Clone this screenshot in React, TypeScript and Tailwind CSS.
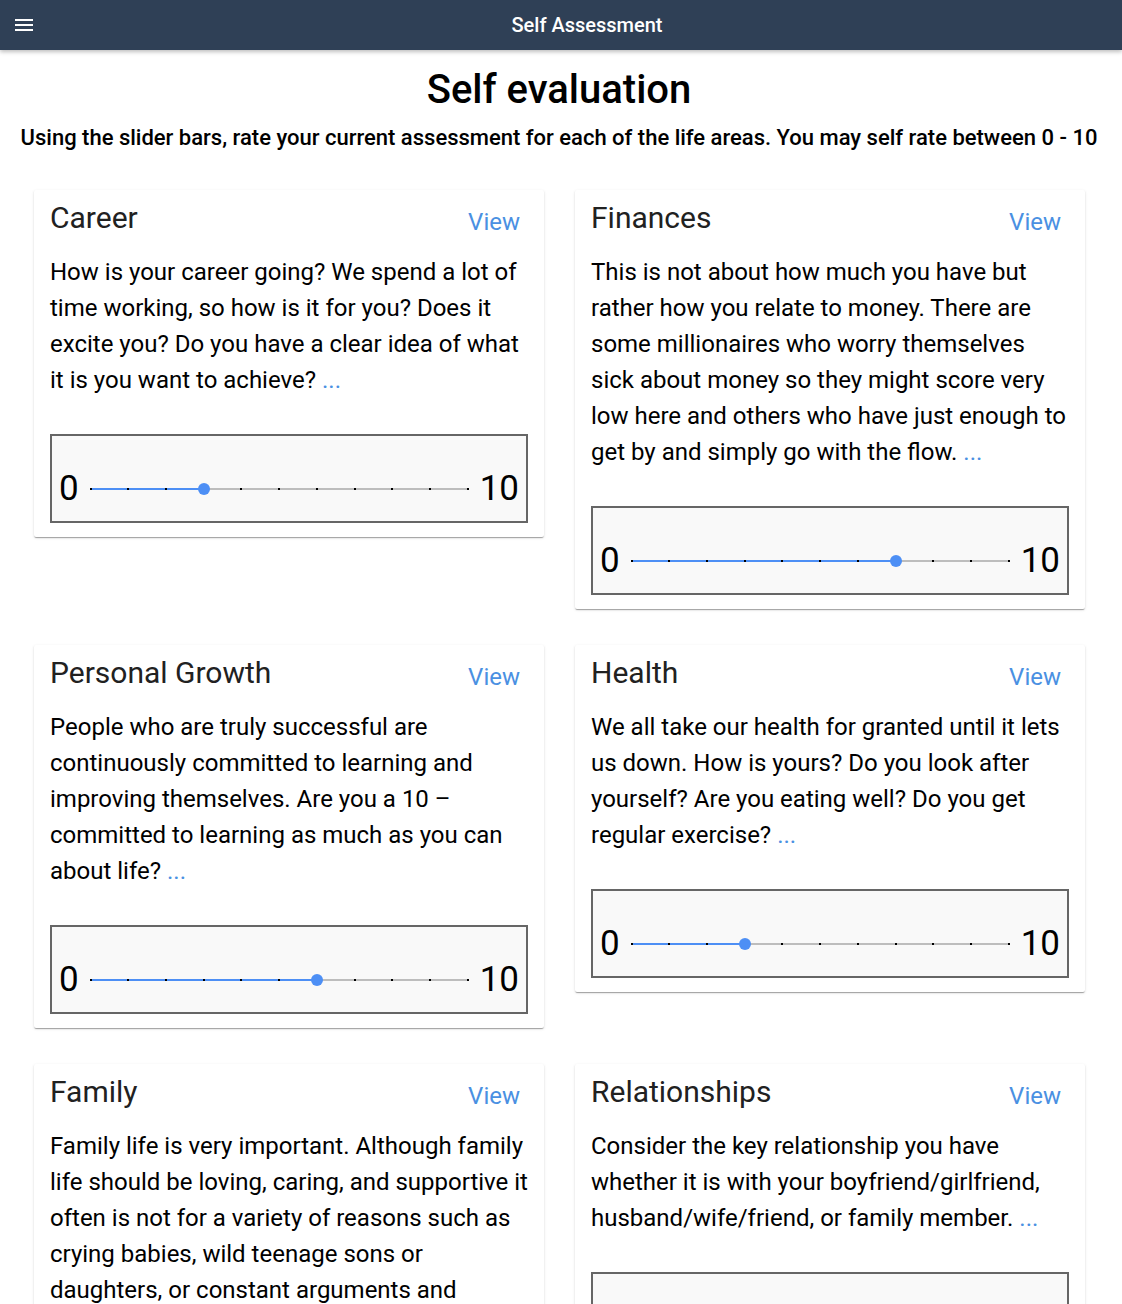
import React from "react";

type Area = {
  title: string;
  text: string;
  value: number;
};

const areas: Area[] = [
  {
    title: "Career",
    text: "How is your career going? We spend a lot of time working, so how is it for you? Does it excite you? Do you have a clear idea of what it is you want to achieve?",
    value: 3,
  },
  {
    title: "Finances",
    text: "This is not about how much you have but rather how you relate to money. There are some millionaires who worry themselves sick about money so they might score very low here and others who have just enough to get by and simply go with the flow.",
    value: 7,
  },
  {
    title: "Personal Growth",
    text: "People who are truly successful are continuously committed to learning and improving themselves. Are you a 10 \u2013 committed to learning as much as you can about life?",
    value: 6,
  },
  {
    title: "Health",
    text: "We all take our health for granted until it lets us down. How is yours? Do you look after yourself? Are you eating well? Do you get regular exercise?",
    value: 3,
  },
  {
    title: "Family",
    text: "Family life is very important. Although family life should be loving, caring, and supportive it often is not for a variety of reasons such as crying babies, wild teenage sons or daughters, or constant arguments and disagreements.",
    value: 5,
  },
  {
    title: "Relationships",
    text: "Consider the key relationship you have whether it is with your boyfriend/girlfriend, husband/wife/friend, or family member.",
    value: 5,
  },
];

const ticks = [0, 1, 2, 3, 4, 5, 6, 7, 8, 9, 10];

function Slider({ value }: { value: number }) {
  const pct = value * 10;
  return (
    <div className="h-[89px] border-2 border-[#666666] bg-[#f9f9f9] flex items-center pt-[20px] pl-[7px] pr-[7px]">
      <span className="text-[35px] leading-none text-black">0</span>
      <div className="relative flex-1 h-[2px] mx-3 bg-[#bdbdbd]">
        {/* filled part */}
        <div className="absolute left-0 top-0 h-[2px] bg-[#4d8ff5]" style={{ width: `${pct}%` }} />
        {ticks.map((t) => (
          <div
            key={t}
            className="absolute top-0 w-[2px] h-[2px] -ml-[1px] bg-black"
            style={{ left: `${t * 10}%` }}
          />
        ))}
        <div
          className="absolute top-1/2 w-3 h-3 -ml-1.5 -mt-1.5 rounded-full bg-[#4d8ff5]"
          style={{ left: `${pct}%` }}
        />
      </div>
      <span className="text-[35px] leading-none text-black">10</span>
    </div>
  );
}

function AreaCard({ area }: { area: Area }) {
  return (
    <div className="bg-white rounded-[2px] px-4 pt-2 pb-[14px] shadow-[0_2px_1px_-1px_rgba(0,0,0,0.2),0_1px_1px_0_rgba(0,0,0,0.14),0_1px_3px_0_rgba(0,0,0,0.12)]">
      <div className="flex items-center justify-between">
        <h2 className="text-[30px] leading-[40px] text-[#212121]">{area.title}</h2>
        <a className="text-[24px] leading-[32px] text-[#4a90e2] mt-2 mr-2">View</a>
      </div>
      <p className="mt-4 text-[24px] leading-[36px] text-black">
        {area.text} <span className="text-[#4a90e2]">...</span>
      </p>
      <div className="mt-[36px]">
        <Slider value={area.value} />
      </div>
    </div>
  );
}

export default function App() {
  return (
    <div className="min-h-screen bg-white font-['Roboto',sans-serif]">
      {/* Top bar */}
      <header className="h-[50px] bg-[#2f4056] flex items-center text-white shadow-[0_2px_4px_rgba(0,0,0,0.25)]">
        <button className="w-[52px] h-full flex items-center pl-[15px]">
          <span className="flex flex-col gap-[3px]">
            <span className="block w-[18px] h-[2px] bg-white" />
            <span className="block w-[18px] h-[2px] bg-white" />
            <span className="block w-[18px] h-[2px] bg-white" />
          </span>
        </button>
        <div className="flex-1 text-center text-[20px] font-medium">Self Assessment</div>
      </header>

      <main className="w-[1118px] pb-10">
        <h1 className="mt-4 text-center text-[40px] leading-[48px] font-medium text-black">Self evaluation</h1>
        <p className="mt-3 text-center text-[22px] leading-[24px] font-medium text-black">
          Using the slider bars, rate your current assessment for each of the life areas. You may self rate between 0 - 10
        </p>

        <div className="mt-10 ml-[34px] grid grid-cols-[510px_510px] gap-x-[31px] gap-y-9 items-start">
          {areas.map((a) => (
            <AreaCard key={a.title} area={a} />
          ))}
        </div>
      </main>
    </div>
  );
}
